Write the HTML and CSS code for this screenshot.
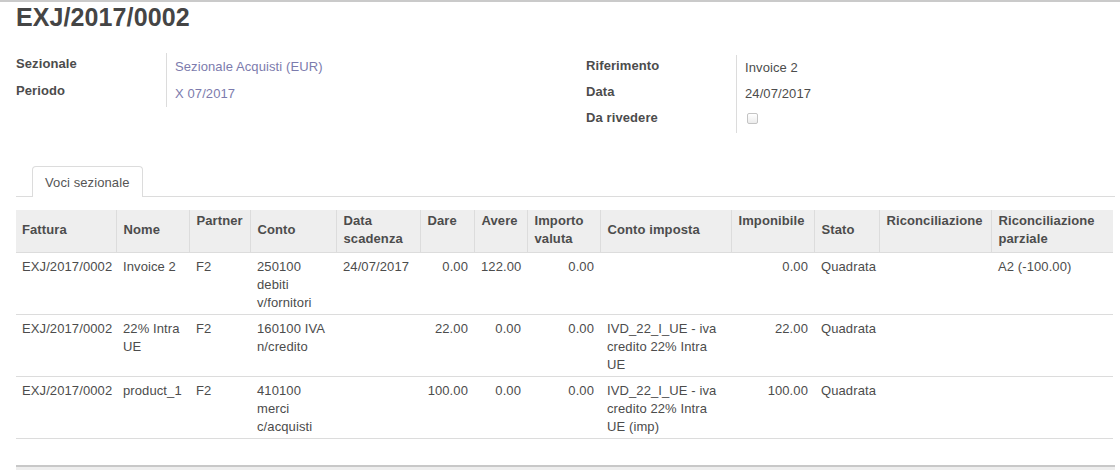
FILE: index.html
```html
<!DOCTYPE html>
<html lang="it">
<head>
<meta charset="utf-8">
<title>EXJ/2017/0002</title>
<link rel="stylesheet" href="styles.css">
</head>
<body>
<div class="topline"></div>
<div class="sheet">
  <h1 class="title">EXJ/2017/0002</h1>
  <div class="groups">
    <div class="group">
      <div class="frow"><div class="flabel">Sezionale</div><div class="fval link">Sezionale Acquisti (EUR)</div></div>
      <div class="frow"><div class="flabel">Periodo</div><div class="fval link">X 07/2017</div></div>
    </div>
    <div class="group group-right">
      <div class="frow"><div class="flabel">Riferimento</div><div class="fval">Invoice 2</div></div>
      <div class="frow"><div class="flabel">Data</div><div class="fval">24/07/2017</div></div>
      <div class="frow"><div class="flabel">Da rivedere</div><div class="fval"><span class="checkbox"></span></div></div>
    </div>
  </div>

  <div class="tabs">
    <div class="tab">Voci sezionale</div>
  </div>

  <table class="list">
    <colgroup>
      <col style="width:100px"><col style="width:73px"><col style="width:61px"><col style="width:86px">
      <col style="width:84px"><col style="width:54px"><col style="width:53px"><col style="width:73px">
      <col style="width:131px"><col style="width:83px"><col style="width:65px"><col style="width:112px">
      <col style="width:122px">
    </colgroup>
    <thead>
      <tr>
        <th>Fattura</th>
        <th>Nome</th>
        <th class="top">Partner</th>
        <th>Conto</th>
        <th>Data scadenza</th>
        <th class="top">Dare</th>
        <th class="top">Avere</th>
        <th>Importo valuta</th>
        <th>Conto imposta</th>
        <th class="top">Imponibile</th>
        <th>Stato</th>
        <th class="top">Riconciliazione</th>
        <th>Riconciliazione parziale</th>
      </tr>
    </thead>
    <tbody>
      <tr>
        <td>EXJ/2017/0002</td>
        <td>Invoice 2</td>
        <td>F2</td>
        <td>250100 debiti v/fornitori</td>
        <td>24/07/2017</td>
        <td class="num">0.00</td>
        <td class="num">122.00</td>
        <td class="num">0.00</td>
        <td class="tax"></td>
        <td class="num">0.00</td>
        <td>Quadrata</td>
        <td></td>
        <td>A2 (-100.00)</td>
      </tr>
      <tr>
        <td>EXJ/2017/0002</td>
        <td>22% Intra UE</td>
        <td>F2</td>
        <td>160100 IVA n/credito</td>
        <td></td>
        <td class="num">22.00</td>
        <td class="num">0.00</td>
        <td class="num">0.00</td>
        <td class="tax">IVD_22_I_UE - iva credito 22% Intra UE</td>
        <td class="num">22.00</td>
        <td>Quadrata</td>
        <td></td>
        <td></td>
      </tr>
      <tr>
        <td>EXJ/2017/0002</td>
        <td>product_1</td>
        <td>F2</td>
        <td>410100 merci c/acquisti</td>
        <td></td>
        <td class="num">100.00</td>
        <td class="num">0.00</td>
        <td class="num">0.00</td>
        <td class="tax">IVD_22_I_UE - iva credito 22% Intra UE (imp)</td>
        <td class="num">100.00</td>
        <td>Quadrata</td>
        <td></td>
        <td></td>
      </tr>
    </tbody>
  </table>
  <div class="footer"></div>
</div>
</body>
</html>
```

FILE: styles.css
```css
html, body {
  margin: 0;
  padding: 0;
  background: #fff;
}
body {
  font-family: "Liberation Sans", Arial, sans-serif;
  font-size: 13px;
  line-height: 18px;
  color: #4c4c4c;
  width: 1120px;
  height: 470px;
  overflow: hidden;
  letter-spacing: 0.1px;
}
.topline {
  height: 2px;
  background: #cacaca;
}
.sheet {
  padding: 0 5px 0 16px;
}
.title {
  margin: 0;
  font-size: 25px;
  line-height: 30px;
  font-weight: bold;
  color: #454545;
  letter-spacing: 0.1px;
}
.groups {
  display: grid;
  grid-template-columns: 570px 1fr;
  margin-top: 21px;
  align-items: start;
}
.group-right {
  margin-top: 2px;
}
.frow {
  display: flex;
  height: 26px;
}
.group:first-child .frow {
  height: 27px;
}
.flabel {
  width: 150px;
  flex: none;
  font-weight: bold;
  padding-top: 2px;
  box-sizing: border-box;
}
.fval {
  border-left: 1px solid #dcdcdc;
  padding: 5px 0 0 8px;
  box-sizing: border-box;
}
.group-right .fval {
  padding-top: 4px;
}
.link {
  color: #7c7bad;
}
.checkbox {
  display: inline-block;
  width: 9px;
  height: 9px;
  margin-top: 2px;
  margin-left: 2px;
  border: 1px solid #c4c4c4;
  border-radius: 2px;
  background: linear-gradient(#ffffff, #ececec);
}
.tabs {
  margin-top: 33px;
  border-bottom: 1px solid #dcdcdc;
  padding-left: 16px;
  display: flex;
}
.tab {
  border: 1px solid #dcdcdc;
  border-bottom: none;
  border-radius: 4px 4px 0 0;
  padding: 7px 12px 5px;
  margin-bottom: -1px;
  background: #fff;
  color: #555;
}
.list {
  margin-top: 13px;
  border-collapse: collapse;
  table-layout: fixed;
  width: 1097px;
}
.list th {
  background: #eeeeee;
  font-weight: bold;
  text-align: left;
  vertical-align: middle;
  padding: 2px 6px 4px 7px;
  border-left: 1px solid #dcdcdc;
  border-bottom: 1px solid #dcdcdc;
  height: 36px;
}
.list th:first-child {
  border-left: none;
  padding-left: 6px;
}
.list th.top {
  vertical-align: top;
}
.list td {
  padding: 5px 6px 2px 7px;
  vertical-align: top;
  border-bottom: 1px solid #dcdcdc;
  height: 54px;
}
.list td:first-child {
  padding-left: 6px;
}
.list td.num {
  text-align: right;
}
.list td.tax {
  padding-right: 14px;
}
.footer {
  margin-top: 26px;
  height: 10px;
  border-top: 2px solid #c8c8c8;
  background: #eeeeee;
}
```
